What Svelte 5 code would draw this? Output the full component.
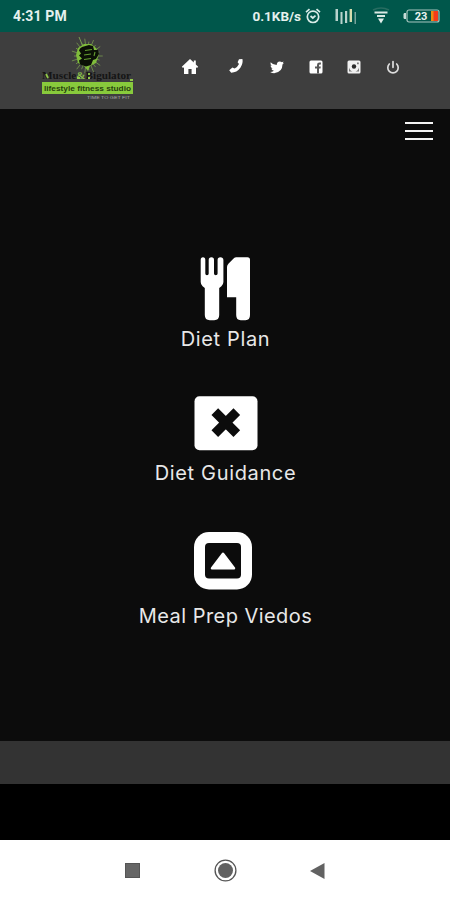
<script>
  const rays = Array.from({ length: 22 }, (_, i) => {
    const a = (i * Math.PI * 2) / 22;
    const r = i % 2 ? 14.5 : 17.5;
    return { x: 46 + Math.cos(a) * r * 0.9, y: 19 + Math.sin(a) * r };
  });
</script>

<div class="phone">
  <div class="status">
    <span class="time">4:31 PM</span>
    <div class="indicators">
      <span class="speed">0.1KB/s</span>
      <svg class="alarm" width="16" height="16" viewBox="0 0 16 16" fill="none" stroke="#d9ece8" stroke-width="1.7">
        <circle cx="8" cy="8.8" r="5.7" />
        <path d="M1 4.2 4.5 1.2M15 4.2 11.5 1.2M5.5 8l2.3 2L10.5 7.6" />
      </svg>
      <svg class="bars" width="22" height="17" viewBox="0 0 22 17">
        <path d="M.5 1H3v12H.5zM5.5 4h2v12h-2zM10 3h2.2v12H10z" fill="#b9d3cd" />
        <path d="M14.6 1H17v13h-2.4z" fill="#d5dcae" />
        <path d="M19.5 4h1.5v12h-1.5z" fill="#76a39b" />
      </svg>
      <svg class="wifi" width="18" height="18" viewBox="0 0 18 18" fill="none">
        <path d="M1 3q8-4 16 0" stroke="#286d61" stroke-width="1.5" />
        <path d="M2.5 5.5h13M5 9h8" stroke="#d9e8e3" stroke-width="2.2" />
        <path d="M6 11.5h6L9 16.5z" fill="#e2eeeb" />
      </svg>
      <svg class="battery" width="37" height="14" viewBox="0 0 37 14">
        <rect x="4" y="1" width="32" height="12" rx="2" fill="none" stroke="#a7c5bf" stroke-width="1.2" />
        <path d="M3 4H1.2L.5 5v4l.7 1H3z" fill="#c7dcd8" />
        <path d="M28 2h3v10h-3z" fill="#ed8b13" />
        <path d="M30.5 2H35v10h-4.5z" fill="#f53b1b" />
        <text x="18" y="11" text-anchor="middle" font-size="11" font-weight="700" fill="#e8f2f0">23</text>
      </svg>
    </div>
  </div>

  <header>
    <svg class="logo" width="94" height="67" viewBox="0 0 94 67">
      {#each rays as r}
        <line x1="46" y1="19" x2={r.x} y2={r.y} stroke="#77994f" stroke-width=".8" />
      {/each}
      <path d="M38 0 43 12" stroke="#789d50" />
      <path d="m37 11 6-4 7 0 5 4 3 6-3 9-6 3-2 5-4-5-6-3-2-8z" fill="#7fbc3b" />
      <path d="m41 10 7-2 4 1 1 4h4l1 4-3 5-3 1-2 5-5 1.5-6-2-1-4 3-2-3-3 2-2-2-3 1-2z" fill="#0b1006" />
      <path d="m44 13.5 7-1M43 18l7-1M43 22.5l7-1M54 15l-1 4" stroke="#659d31" stroke-width="1.1" />
      <text class="brand" x="1" y="42" textLength="89" lengthAdjust="spacingAndGlyphs">Muscle<tspan class="lime">&amp;</tspan>Bigulator</text>
      <path d="m5 37 2 4M36 41h3M48 36v2M47 41h2M89 43h3" stroke="#91c84a" stroke-width="1.8" fill="none" />
      <rect x="1" y="45" width="91" height="12" fill="#88ca3c" />
      <text class="studio" x="3" y="53.5" textLength="87" lengthAdjust="spacingAndGlyphs">lifestyle fitness studio</text>
      <text class="tagline" x="46" y="62" textLength="43" lengthAdjust="spacingAndGlyphs">TIME TO GET FIT</text>
    </svg>
    <nav>
      <svg width="18" height="16" viewBox="0 0 18 16">
        <path d="M9 0 .8 7.7 2 9l1-.7V15h4.4v-5h3.2v5H15V8.3l1 .7 1.2-1.3L14.8 5.4V1.5h-2v2.1z" />
      </svg>
      <svg class="phone-icon" width="18" height="16" viewBox="0 0 18 16">
        <path d="m12 .3 3.4-.2q1 4.2-2 8.7-3.5 4.8-9.2 5l-2-2.6 3.2-2.8 2.2 1.2q3-1.4 4.4-4.5L10.6 3.3z" />
      </svg>
      <svg class="bird" width="18" height="16" viewBox="0 0 18 16">
        <path d="M2.6 3.2Q5.2 6 8.7 6.1q0-3.5 3.1-3.7 1.3 0 2.1.8l1.7-.7-.8 1.7 1.1-.1-1.4 1.5q-.2 7.5-7.6 8.5-2.5.2-4.8-1.2 2.2 0 3.8-1.2-2.1-.4-2.6-2l1.3-.1q-2.1-.8-2.1-3l1.2.3Q2 5.2 2.6 3.2z" />
      </svg>
      <svg class="fb" width="18" height="16" viewBox="0 0 18 16">
        <rect x="2.5" y="1.5" width="13" height="13" rx="1.5" />
        <path d="M10 14.5V9.6H8V7.5h2V6q0-2.4 2.5-2.4h1.4v2h-1q-.9 0-.9.8v1.1h1.8l-.3 2.1H12v4.9z" fill="#585858" />
      </svg>
      <svg class="insta" width="18" height="16" viewBox="0 0 18 16">
        <rect x="2.5" y="1.5" width="13" height="13" rx="1.5" fill="#f0f0f0" />
        <circle cx="9" cy="7.5" r="2.2" fill="#292929" />
        <path d="M12 3.5h1.8v1.8H12zM4 8.5q1 3.5 3.5 4H4zM14 8.5q-1 3.5-3.5 4H14z" fill="#777" />
      </svg>
      <svg class="power" width="18" height="16" viewBox="0 0 18 16" fill="none" stroke="#dedede" stroke-width="1.7" stroke-linecap="round">
        <path d="M9 2.5v5.8M5.3 5a5.2 5.2 0 1 0 7.4 0" />
      </svg>
    </nav>
  </header>

  <main>
    <div class="menu"><i></i><i></i><i></i></div>
    <section class="plan">
      <svg width="50" height="64" viewBox="0 0 50 64" fill="#fff">
        <path d="M.7 3q0-2.7 2.3-2.7T5.3 3v13.5q0 1.8 1.7 1.8t1.7-1.8V3q0-2.7 2.7-2.7T14 3v13.5q0 1.8 1.8 1.8t1.8-1.8V3q0-2.7 2.8-2.7T23.4 3v22q0 2.4-2 4.2L19.2 31v27q0 5.2-5 5.2h-4.4q-5 0-5-5.2V31l-2.2-1.8Q.7 27.6.7 25z" />
        <path d="M36 .3h11.5q2.5 0 2.5 2.5V58q0 5.2-4.5 5.2h-4.8q-4.5 0-4.5-5.2V40.3H27V10q0-2 1.6-3.5l4.5-4.6Q34.3.3 36 .3z" />
      </svg>
      <span>Diet Plan</span>
    </section>
    <section class="guide">
      <svg width="64" height="55" viewBox="0 0 64 55">
        <rect x=".5" y=".2" width="63" height="54" rx="5" fill="#fff" />
        <path d="m20.8 15.6 22 22m0-22-22 22" stroke="#0c0c0c" stroke-width="9.4" fill="none" />
      </svg>
      <span>Diet Guidance</span>
    </section>
    <section class="meal">
      <svg width="58" height="58" viewBox="0 0 58 58">
        <rect width="58" height="57.5" rx="15" fill="#fff" />
        <rect x="11" y="11" width="36" height="35.5" rx="4" fill="#0c0c0c" />
        <path d="M29 21.8 18 36.2h22z" fill="#fff" stroke="#fff" stroke-width="2.5" stroke-linejoin="round" />
      </svg>
      <span>Meal Prep Viedos</span>
    </section>
  </main>
  <footer></footer>
  <div class="gap"></div>
  <div class="system">
    <svg width="15" height="15" viewBox="0 0 15 15"><rect x=".5" y=".5" width="14" height="14" fill="#666" stroke="#555" /></svg>
    <svg width="23" height="23" viewBox="0 0 23 23"><circle cx="11.5" cy="11.5" r="10.4" fill="none" stroke="#555" stroke-width="1.3" /><circle cx="11.5" cy="11.5" r="7.5" fill="#616161" /></svg>
    <svg width="15" height="16" viewBox="0 0 15 16"><path d="M0 8 14.5 0v16z" fill="#626262" /></svg>
  </div>
</div>

<style>
  :global(body) { margin: 0; background: #000; }
  .phone { width: 450px; height: 900px; display: flex; flex-direction: column; overflow: hidden; font-family: Roboto, sans-serif; }
  svg { display: block; flex: none; }
  .status { height: 32px; box-sizing: border-box; padding: 0 10px 0 13px; display: flex; align-items: center; justify-content: space-between; background: #00574b; color: #e5f1ee; font-weight: 700; font-size: 14px; }
  .time { letter-spacing: .15px; }
  .indicators { display: flex; align-items: center; }
  .speed { font-size: 13.5px; letter-spacing: 0; }
  .alarm { margin-left: 4px; }
  .bars { margin-left: 14px; }
  .wifi { margin-left: 15px; }
  .battery { margin-left: 13px; }
  header { height: 77px; display: flex; background: #3e3e3e; }
  .logo { margin: 5px 0 0 41px; overflow: visible; }
  .brand { font: 700 10px "Liberation Serif", serif; fill: #151515; }
  .brand .lime { fill: #86b94b; }
  .studio { font: 700 8px "Liberation Sans", sans-serif; fill: #29420f; }
  .tagline { font: 4.2px "Liberation Sans", sans-serif; fill: #aaa; }
  nav { display: flex; height: 16px; margin: 27px 0 0 46px; fill: #fff; }
  .phone-icon { margin-left: 28px; }
  .bird { margin-left: 23px; }
  .fb { margin-left: 21px; }
  .insta { margin-left: 20px; }
  .power { margin-left: 21px; }
  main { height: 632px; display: flex; flex-direction: column; align-items: center; background: #0c0c0c; }
  .menu { width: 28px; height: 18px; margin: 13px 17px 0 0; align-self: flex-end; display: flex; flex-direction: column; justify-content: space-between; }
  .menu i { height: 2px; background: #f4f4f4; }
  section { display: flex; flex-direction: column; align-items: center; color: #e8e8e8; font: 20px/24px Inter, sans-serif; letter-spacing: .65px; white-space: nowrap; }
  .plan { margin-top: 117px; }
  .plan span { margin-top: 6px; padding-left: 1px; }
  .guide { margin-top: 45px; }
  .guide svg { margin-left: 1px; }
  .guide span { margin-top: 10px; padding-left: 1px; }
  .meal { margin-top: 47px; }
  .meal svg { margin-right: 4px; }
  .meal span { margin-top: 14px; padding-left: 1px; letter-spacing: .45px; }
  footer { height: 43px; background: #333; }
  .gap { height: 56px; background: #000; }
  .system { height: 60px; box-sizing: border-box; padding: 1px 125px 0; display: flex; align-items: center; justify-content: space-between; background: #fff; }
</style>
